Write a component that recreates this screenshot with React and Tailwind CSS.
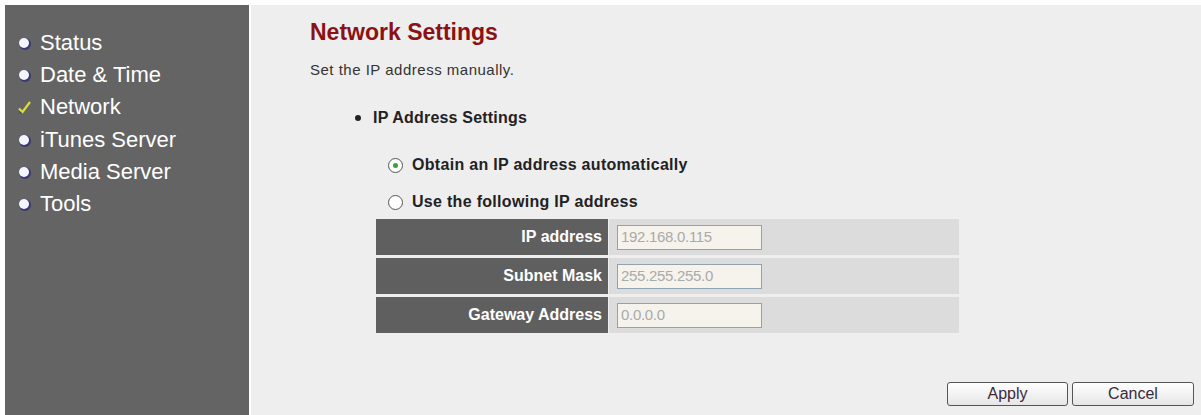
export default function App() {
  const items = [
    { t: "Status" },
    { t: "Date & Time" },
    { t: "Network", check: true },
    { t: "iTunes Server" },
    { t: "Media Server" },
    { t: "Tools" },
  ];
  const rows = [
    ["IP address", "192.168.0.115"],
    ["Subnet Mask", "255.255.255.0"],
    ["Gateway Address", "0.0.0.0"],
  ];
  return (
    <div className="w-[1201px] h-[415px] bg-white pt-[5px] pl-[5px] flex overflow-hidden" style={{ fontFamily: '"Liberation Sans", Arial, sans-serif' }}>
      <div className="w-[244px] h-[410px] bg-[#646464] pt-[22px] pl-[12px] flex flex-col">
        {items.map((it) => (
          <div key={it.t} className="h-[32.2px] flex items-center text-[22px] text-white leading-none">
            <span className="w-[23px] flex items-center justify-start">
              {it.check ? (
                <svg width="15" height="15" viewBox="0 0 15 15">
                  <path d="M2.5 11.5 L5.5 13.5" stroke="#3a3a6a" strokeWidth="1.4" fill="none" />
                  <path d="M2 8.5 L5.5 12 L13 2" stroke="#d9dc3a" strokeWidth="2.2" fill="none" />
                </svg>
              ) : (
                <span className="w-[10px] h-[10px] rounded-full bg-[#f4f4ff] shadow-[1px_1px_0_1px_#3a3a70] ml-[2px]" />
              )}
            </span>
            <span>{it.t}</span>
          </div>
        ))}
      </div>
      <div className="w-[2px] bg-white" />
      <div className="flex-1 h-[410px] bg-[#eeeeee] pl-[59px] pr-[7px] flex flex-col">
        <div className="mt-[14px] text-[23px] font-bold text-[#8b1212] leading-[26px]">Network Settings</div>
        <div className="mt-[16px] text-[15px] tracking-[0.5px] text-[#333] leading-[18px]">Set the IP address manually.</div>
        <div className="mt-[30px] ml-[45px] flex items-center text-[16px] tracking-[0.2px] font-bold text-[#222] leading-[18px]">
          <span className="w-[6px] h-[6px] rounded-full bg-[#222] mr-[12px]" />
          IP Address Settings
        </div>
        <div className="mt-[29px] ml-[78px] flex items-center text-[16px] tracking-[0.3px] font-bold text-[#222] leading-[18px]">
          <span className="w-[15px] h-[15px] rounded-full border border-[#555] bg-white flex items-center justify-center mr-[9px]">
            <span className="w-[5px] h-[5px] rounded-full bg-[#3aa03a]" />
          </span>
          Obtain an IP address automatically
        </div>
        <div className="mt-[19px] ml-[78px] flex items-center text-[16px] tracking-[0.3px] font-bold text-[#222] leading-[18px]">
          <span className="w-[15px] h-[15px] rounded-full border border-[#555] bg-white mr-[9px]" />
          Use the following IP address
        </div>
        <div className="mt-[8px] ml-[66px] flex flex-col gap-[3px] w-[583px]">
          {rows.map(([l, v]) => (
            <div key={l} className="flex h-[36px] gap-[1px]">
              <div className="w-[232px] bg-[#5f5f5f] text-white font-bold text-[16px] flex items-center justify-end pr-[6px]">{l}</div>
              <div className="flex-1 bg-[#dcdcdc] flex items-center pl-[8px]">
                <div className="w-[145px] h-[25px] bg-[#f5f3ec] border border-[#8fa3b3] text-[15px] text-[#aaaaaa] flex items-center pl-[3px] tracking-[-0.3px]">{v}</div>
              </div>
            </div>
          ))}
        </div>
        <div className="mt-auto mb-[9px] flex justify-end gap-[4px] pr-0">
          <button className="w-[121px] h-[24px] rounded-[3px] border border-[#555] bg-gradient-to-b from-white to-[#e6e6e6] text-[16px] text-[#3a2a3a] leading-none">Apply</button>
          <button className="w-[122px] h-[24px] rounded-[3px] border border-[#555] bg-gradient-to-b from-white to-[#e6e6e6] text-[16px] text-[#3a2a3a] leading-none">Cancel</button>
        </div>
      </div>
    </div>
  );
}
